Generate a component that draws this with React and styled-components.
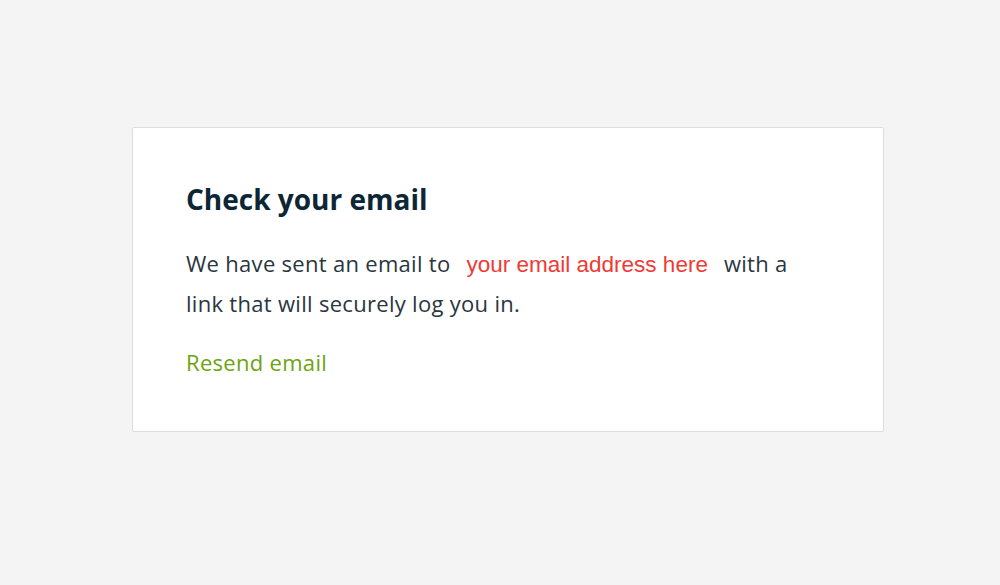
import React from 'react';
import styled, { createGlobalStyle } from 'styled-components';

const GlobalStyle = createGlobalStyle`
  html, body {
    margin: 0;
    padding: 0;
    background: #f4f4f4;
  }
  body {
    font-family: "Open Sans", Lato, sans-serif;
    -webkit-font-smoothing: antialiased;
  }
`;

const Page = styled.div`
  min-height: 585px;
  box-sizing: border-box;
  padding: 127px 0 0 132px;
`;

const Card = styled.section`
  width: 752px;
  height: 305px;
  box-sizing: border-box;
  background: #fff;
  border: 1px solid #dcdcdc;
  border-radius: 2px;
  padding: 52px 53px 0 53px;
`;

const Title = styled.h1`
  margin: 0 0 26px;
  font-size: 28px;
  line-height: 38px;
  font-weight: 700;
  color: #0d2636;
`;

const Message = styled.p`
  margin: 0;
  font-size: 22px;
  line-height: 38px;
  letter-spacing: 0.3px;
  color: #2a3640;
  max-width: 620px;
`;

const Email = styled.span`
  margin: 0 16px;
  font-family: "Liberation Sans", Arial, sans-serif;
  font-size: 22.5px;
  letter-spacing: 0;
  color: #ef3a35;
`;

const ResendLink = styled.a`
  display: inline-block;
  margin-top: 25px;
  font-size: 22px;
  line-height: 30px;
  letter-spacing: 0.3px;
  color: #6ca311;
  text-decoration: none;
  cursor: pointer;
`;

export default function App() {
  return (
    <>
      <GlobalStyle />
      <Page>
        <Card>
          <Title>Check your email</Title>
          <Message>
            We have sent an email to<Email>your email address here</Email>with a link that will securely log you in.
          </Message>
          <ResendLink>Resend email</ResendLink>
        </Card>
      </Page>
    </>
  );
}
